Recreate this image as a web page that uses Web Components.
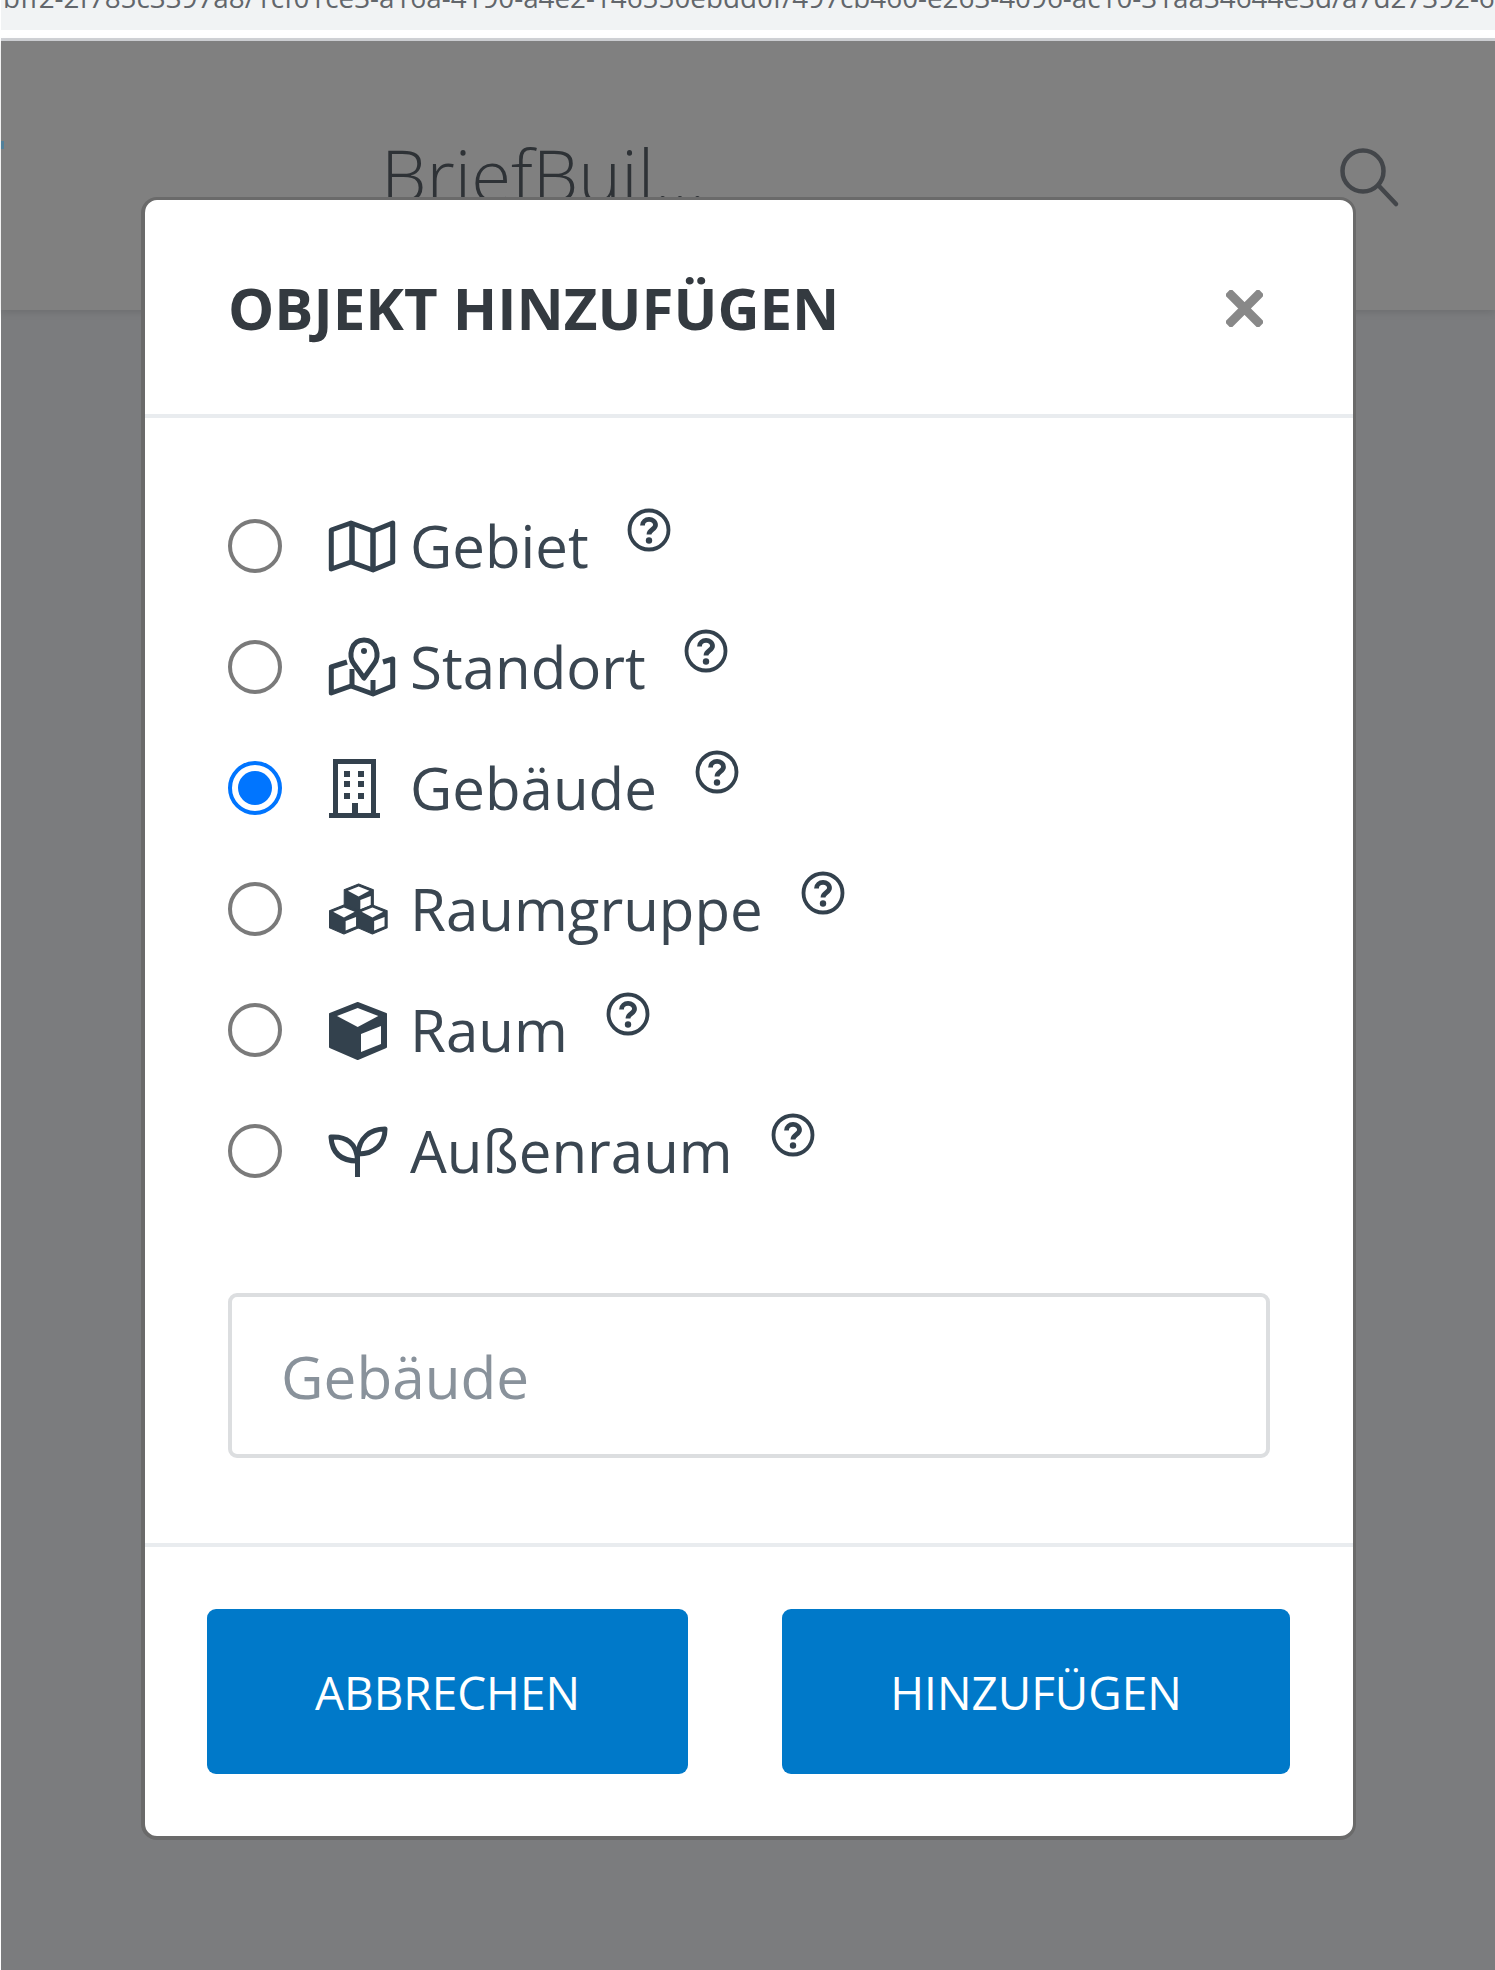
<!DOCTYPE html>
<html lang="de">
<head>
<meta charset="utf-8">
<title>BriefBuilder</title>
<style>
    html, body { margin: 0; padding: 0; background: #ffffff; }
    body { font-family: "Open Sans", "Liberation Sans", sans-serif; }
</style>
</head>
<body>
<brief-page>
    <url-bar slot="top">bff2-2f785c3397a8/1cf01ce3-a16a-4190-a4e2-146550ebdd0f/497cb460-e263-4096-ac10-31aa34644e3d/a7d27392-6a10</url-bar>
    <app-header slot="top">BriefBuil...</app-header>
    <object-dialog heading="OBJEKT HINZUFÜGEN">
        <type-option icon="map" label="Gebiet"></type-option>
        <type-option icon="pin" label="Standort"></type-option>
        <type-option icon="building" label="Gebäude" checked></type-option>
        <type-option icon="boxes" label="Raumgruppe"></type-option>
        <type-option icon="box" label="Raum"></type-option>
        <type-option icon="sprout" label="Außenraum"></type-option>
        <text-field slot="field">Gebäude</text-field>
        <dialog-button slot="actions" width="481">ABBRECHEN</dialog-button>
        <dialog-button slot="actions" width="508">HINZUFÜGEN</dialog-button>
    </object-dialog>
</brief-page>

<script>
/**
 * Shape of one room cube, drawn around y = 0, used for both the box and the boxes icon.
 */
const CUBE = `
    <path fill="currentColor" stroke="currentColor" stroke-width="2" stroke-linejoin="round" d="M28.7 -27L57 -16V17L28.7 29L1 17V-16Z"/>
    <path fill="#fff" d="M8 -14L28.7 -22L49.3 -14L28.7 -3Z"/>
    <path fill="#fff" d="M32 4L52 -4V14L32 22Z"/>`;

// every icon is drawn with y = 0 on the middle of its row
const ICONS = {
    map: `<g fill="none" stroke="currentColor" stroke-width="5" stroke-linejoin="round">
            <path d="M2.300 -16V23L22 16L44 24L63.700 16V-23L44 -15L22 -23Z"/>
            <path d="M23 -22V15M44 -15V23" stroke-width="5.500"/>
        </g>`,
    pin: `<g fill="none" stroke="currentColor" stroke-width="5" stroke-linejoin="round">
            <path d="M35 11L25 -3C19 -11 22 -27 35 -27C48 -27 51 -11 45 -3Z"/>
            <path d="M18 -5L2.300 0V26L22 19L44 27L63.700 19V-8L54 -5"/>
            <path d="M23 2V18M44 13V26"/>
        </g>
        <circle cx="35" cy="-16" r="3" fill="currentColor"/>`,
    building: `<path fill="none" stroke="currentColor" stroke-width="5" d="M6.500 27V-26.500H44.500V27"/>
        <path fill="currentColor" d="M0 25H51V30H0ZM23 15H29V26H23ZM15 -17H21V-11H15ZM29 -17H35V-11H29ZM15 -7H21V-1H15ZM29 -7H35V-1H29ZM15 5H21V11H15ZM29 5H35V11H29Z"/>`,
    boxes: `<g transform="translate(14.700 -11) scale(.52)">${CUBE}</g>
        <g transform="translate(0 10) scale(.52)">${CUBE}</g>
        <g transform="translate(28.500 10) scale(.52)">${CUBE}</g>`,
    box: CUBE,
    sprout: `<g fill="none" stroke="currentColor" stroke-width="5" stroke-linejoin="round">
            <path d="M28.500 10C12 10 3 2 2 -14C17 -15 28 -8 28.500 10Z"/>
            <path d="M29 3C30 -13 41 -22 56 -22C56 -7 46 3 29 3Z"/>
            <path d="M28.500 0V26"/>
        </g>`
};

/**
 * Grey browser page behind the dialog.
 */
class BriefPage extends HTMLElement {
    constructor() {
        super();
        this.attachShadow({ mode: 'open' });
        this.shadowRoot.innerHTML = `
            <style>
                :host { display: block; position: relative; height: 1970px; overflow: hidden; background: #fff; }
                .stage { position: absolute; inset: 41px 0 0 1px; background: #7b7c7e; }
                .edge { position: absolute; left: 1px; right: 0; top: 38px; height: 3px; background: #d2d4d8; }
            </style>
            <div class="edge"></div>
            <div class="stage"></div>
            <slot name="top"></slot>
            <slot></slot>
        `;
    }
}

/**
 * Cut off strip of the address bar at the very top.
 */
class UrlBar extends HTMLElement {
    constructor() {
        super();
        this.attachShadow({ mode: 'open' });
        this.shadowRoot.innerHTML = `
            <style>
                :host { display: block; position: relative; height: 30px; margin: 0 0 11px 1px; overflow: hidden; background: #f1f3f4; }
                .text { margin: -21px 0 0 2px; font: 400 27.800px/36px "Open Sans", sans-serif; color: #62666b; white-space: nowrap; }
            </style>
            <div class="text"><slot></slot></div>
        `;
    }
}

/**
 * Application header, dimmed by the dialog backdrop.
 */
class AppHeader extends HTMLElement {
    constructor() {
        super();
        this.attachShadow({ mode: 'open' });
        this.shadowRoot.innerHTML = `
            <style>
                :host { display: flex; position: relative; height: 269px; margin-left: 1px; padding: 0 95px 0 380px; box-sizing: border-box; background: #808080; box-shadow: 0 2px 8px rgba(0,0,0,.12); }
                .name { flex: 1; font: 300 72.600px/104px "Open Sans", sans-serif; color: #2e3236; padding-top: 81px; }
                svg { margin-top: 105px; }
                .mark { position: absolute; left: 0; top: 100px; width: 3px; height: 8px; background: #52809a; }
            </style>
            <i class="mark"></i>
            <div class="name"><slot></slot></div>
            <svg width="62" height="62" viewBox="0 0 62 62" fill="none" stroke="#43464a" stroke-width="4.500">
                <circle cx="25" cy="25" r="20.500"/>
                <path d="M41 40L58 58" stroke-linecap="round"/>
            </svg>
        `;
    }
}

/**
 * Dialog for adding an object: title, type options, name field and actions.
 */
class ObjectDialog extends HTMLElement {
    constructor() {
        super();
        this.attachShadow({ mode: 'open' });
        this.shadowRoot.innerHTML = `
            <style>
                :host { display: block; position: absolute; left: 141px; top: 197px; width: 1215px; box-sizing: border-box; border: solid #6a6a6a; border-width: 3px 3px 4px 4px; border-radius: 16px; background: #fff; color: #36424d; }
                header { display: flex; align-items: center; justify-content: space-between; box-sizing: border-box; height: 218px; padding: 2px 90px 0 83px; border-bottom: 4px solid #e9ecef; }
                h1 { margin: 0; font: 700 58.200px/80px "Open Sans", sans-serif; color: #343a40; }
                svg { display: block; }
                .options { padding: 67px 84px 0 83px; }
                .field { padding: 82px 83px 85px 83px; border-bottom: 4px solid #e9ecef; }
                footer { display: flex; justify-content: space-between; padding: 62px 63px 62px 62px; }
            </style>
            <header>
                <h1></h1>
                <svg width="37" height="37" viewBox="0 0 37 37" stroke="#888" stroke-width="9" stroke-linecap="square"><path d="M5 5L32 32M32 5L5 32"/></svg>
            </header>
            <div class="options"><slot></slot></div>
            <div class="field"><slot name="field"></slot></div>
            <footer><slot name="actions"></slot></footer>
        `;
        this.shadowRoot.querySelector('h1').textContent = this.getAttribute('heading');
    }
}

/**
 * One radio row: circle, icon, label and help mark.
 */
class TypeOption extends HTMLElement {
    constructor() {
        super();
        this.attachShadow({ mode: 'open' });
        const checked = this.hasAttribute('checked');
        this.shadowRoot.innerHTML = `
            <style>
                :host { display: flex; align-items: center; height: 121px; }
                .radio { box-sizing: border-box; width: 54px; height: 54px; margin-right: 47px; border: 4px solid #7a7a7a; border-radius: 50%; display: flex; align-items: center; justify-content: center; }
                .radio.on { border-color: #0075ff; }
                .radio.on::after { content: ""; width: 34px; height: 34px; border-radius: 50%; background: #0075ff; }
                .icon { display: block; width: 66px; height: 72px; margin-right: 15px; color: #33414d; overflow: visible; }
                .label { font: 400 58.200px/80px "Open Sans", sans-serif; color: #3a4651; }
                .help { display: block; margin: -32px 0 0 38px; }
            </style>
            <span class="radio ${checked ? 'on' : ''}"></span>
            <svg class="icon" viewBox="0 -36 66 72">${ICONS[this.getAttribute('icon')]}</svg>
            <span class="label"></span>
            <svg class="help" width="44" height="44" viewBox="0 0 44 44" fill="none" stroke="#33414d">
                <circle cx="22" cy="22" r="19.500" stroke-width="3.800"/>
                <path d="M15.500 17.500C15.500 9.500 28.500 9.500 28.500 17C28.500 21.500 22 21.500 22 26.500" stroke-width="4.800"/>
                <circle cx="22" cy="32.500" r="3.200" fill="#33414d" stroke="none"/>
            </svg>
        `;
        this.shadowRoot.querySelector('.label').textContent = this.getAttribute('label');
    }
}

/**
 * Name field showing its placeholder.
 */
class TextField extends HTMLElement {
    constructor() {
        super();
        this.attachShadow({ mode: 'open' });
        this.shadowRoot.innerHTML = `
            <style>
                :host { display: flex; align-items: center; box-sizing: border-box; height: 165px; padding: 0 49px; border: 4px solid #dcdee0; border-radius: 9px; font: 400 58.500px/80px "Open Sans", sans-serif; color: #89929b; }
            </style>
            <slot></slot>
        `;
    }
}

/**
 * Blue dialog footer button.
 */
class DialogButton extends HTMLElement {
    constructor() {
        super();
        this.attachShadow({ mode: 'open' });
        this.shadowRoot.innerHTML = `
            <style>
                :host { display: flex; align-items: center; justify-content: center; height: 165px; border-radius: 9px; background: #0079c9; color: #fff; font: 400 45.900px/62px "Open Sans", sans-serif; }
            </style>
            <slot></slot>
        `;
        this.style.width = this.getAttribute('width') + 'px';
    }
}

customElements.define('brief-page', BriefPage);
customElements.define('url-bar', UrlBar);
customElements.define('app-header', AppHeader);
customElements.define('object-dialog', ObjectDialog);
customElements.define('type-option', TypeOption);
customElements.define('text-field', TextField);
customElements.define('dialog-button', DialogButton);
</script>
</body>
</html>
